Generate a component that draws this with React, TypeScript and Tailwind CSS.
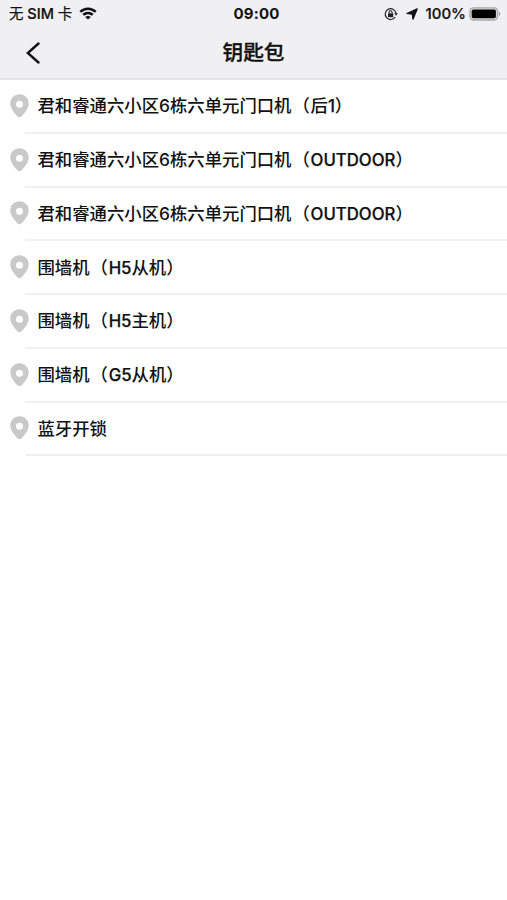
interface Device {
  name: string;
  code?: string;
  suffix?: string;
}

const building = '君和睿通六小区6栋六单元门口机';

const devices: Device[] = [
  { name: building, suffix: '后', code: '1' },
  { name: building, code: 'OUTDOOR' },
  { name: building, code: 'OUTDOOR' },
  { name: '围墙机', code: 'H5', suffix: '从机' },
  { name: '围墙机', code: 'H5', suffix: '主机' },
  { name: '围墙机', code: 'G5', suffix: '从机' },
  { name: '蓝牙开锁' },
];

function WifiIcon() {
  return (
    <svg className="ml-[7px] h-[13px] w-[18px]" viewBox="0 0 18 13" fill="none" stroke="#111" strokeWidth="2.5">
      <path d="M1.300 4.900C5.600.6 12.400.6 16.700 4.900" />
      <path d="M4.200 7.900c2.700-2.600 6.900-2.600 9.600 0" />
      <path d="M9 12.600 6.200 10c1.500-1.400 4.100-1.400 5.600 0z" fill="#111" stroke="none" />
    </svg>
  );
}

function RotationLockIcon() {
  return (
    <svg className="h-[14px] w-[14px]" viewBox="0 0 14 14" fill="none" stroke="#222">
      <path d="M11.200 10A5.400 5.400 0 1 1 12 6.600" strokeWidth="1.2" />
      <path d="M10.300 6.300h3.500l-1.700 2.500z" fill="#222" stroke="none" />
      <path d="M4 6.300h5.200v3.900H4z" fill="#222" stroke="none" />
      <path d="M5.100 6.500V5.200a1.500 1.500 0 0 1 3 0v1.300" strokeWidth="1.100" />
    </svg>
  );
}

function StatusBar() {
  return (
    <div className="grid h-[27px] grid-cols-[1fr_auto_1fr] items-center pl-[9px] pr-[6px] text-[15px] leading-[27px]">
      <div className="flex items-center">
        <span className="whitespace-pre text-[14.5px] [-webkit-text-stroke:0.2px_#111]">
          无<span className="font-medium"> SIM </span>卡
        </span>
        <WifiIcon />
      </div>
      <span className="pl-[3px] text-[15px] font-bold tracking-[0.2px]">09:00</span>
      <div className="flex items-center justify-end">
        <RotationLockIcon />
        <svg className="ml-[8px] h-[12px] w-[12px]" viewBox="0 0 12 12" fill="#111">
          <path d="M11.200.9 7 11.200 6.300 6.100.9 5.500z" stroke="#111" strokeWidth="1.200" strokeLinejoin="round" />
        </svg>
        <span className="ml-[8px] text-[15px] font-medium [-webkit-text-stroke:0.2px_#111]">100%</span>
        <svg className="ml-[3px] h-[14px] w-[32px] shrink-0" viewBox="0 0 32 14">
          <rect x="1" y=".8" width="27.500" height="12.200" rx="3.500" fill="#dededf" stroke="#a8a8aa" strokeWidth="1.300" />
          <rect x="2.700" y="2.600" width="24.200" height="8.600" rx="1.600" fill="#000" />
          <path d="M29.800 4.800c2 .5 2 3.800 0 4.300z" fill="#a0a0a2" />
        </svg>
      </div>
    </div>
  );
}

function PinIcon() {
  return (
    <svg className="mb-[2px] h-[24px] w-[19px] shrink-0" viewBox="0 0 19 24">
      <path
        fill="#c9c9c9"
        fillRule="evenodd"
        d="M9.500.3C4.300.3.3 4.400.3 9.500c0 4.100 2.600 8 7.400 13 1 1.100 2.600 1.100 3.600 0 4.800-5 7.400-8.900 7.400-13C18.700 4.400 14.700.3 9.500.3Zm0 6.500a3.500 3.500 0 1 1 0 7 3.500 3.500 0 0 1 0-7Z"
      />
    </svg>
  );
}

function DeviceLabel({ name, code, suffix }: Device) {
  const latin = code && (
    <span className="text-[16.800px] [-webkit-text-stroke:0.25px_#111]">{code}</span>
  );
  return (
    <span>
      {name}
      {code && (
        <>
          <span className="ml-[1px] mr-[0.700px]">（</span>
          {code === '1' ? <>{suffix}{latin}</> : <>{latin}{suffix}</>}
          <span>）</span>
        </>
      )}
    </span>
  );
}

export default function App() {
  return (
    <div className="h-[900px] w-full overflow-hidden bg-white font-['Inter','Noto_Sans_CJK_SC',sans-serif] text-[#111]">
      <header className="h-[80px] border-b-2 border-[#e4e4e6] bg-[#f0f0f2]">
        <StatusBar />
        <div className="grid h-[51px] grid-cols-[1fr_auto_1fr] items-center">
          <button className="ml-[25px] w-[16px]" aria-label="返回">
            <svg className="h-[22px] w-[16px]" viewBox="0 0 16 22" fill="none" stroke="#111" strokeWidth="2.400" strokeLinecap="round">
              <path d="M13.500 1.500 2.800 11l10.700 9.500" />
            </svg>
          </button>
          <h1 className="text-[20.700px] font-medium leading-[28px] [-webkit-text-stroke:0.3px_#111]">钥匙包</h1>
        </div>
      </header>
      <ul>
        {devices.map((device, i) => (
          <li key={i} className="flex h-[53.750px] items-center pl-[9.500px]">
            <PinIcon />
            <div className="-ml-[3.500px] flex h-full flex-1 items-center whitespace-nowrap border-b-2 border-[#f0f0f0] pl-[12.500px] pt-px text-[17.380px] font-medium leading-[24px]">
              <DeviceLabel {...device} />
            </div>
          </li>
        ))}
      </ul>
    </div>
  );
}
